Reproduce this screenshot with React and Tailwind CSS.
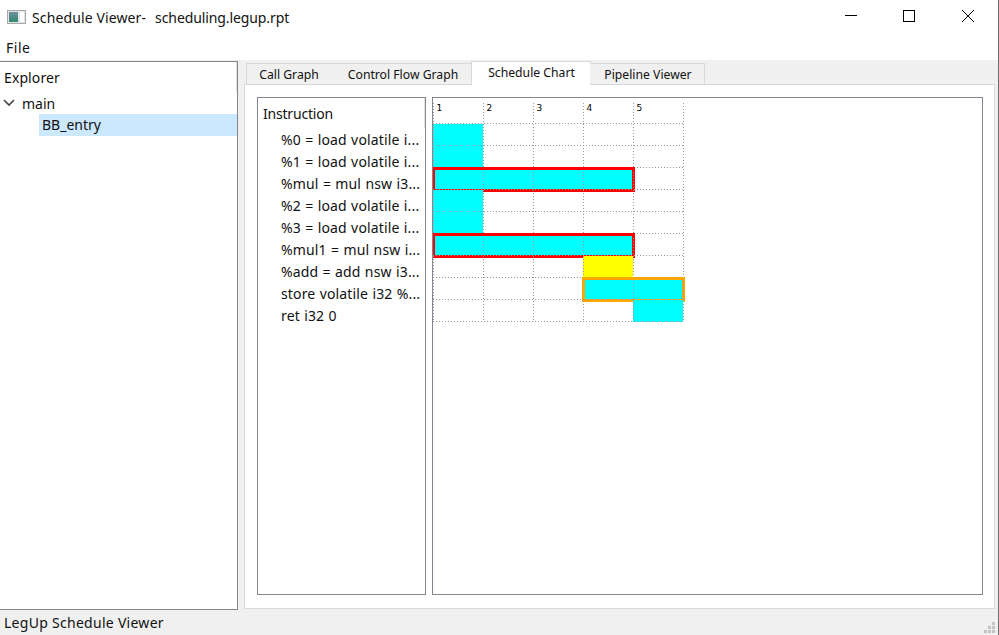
const rows = ['%0 = load volatile i...','%1 = load volatile i...','%mul = mul nsw i3...','%2 = load volatile i...','%3 = load volatile i...','%mul1 = mul nsw i...','%add = add nsw i3...','store volatile i32 %...','ret i32 0'];
const bars = [
  { r: 0, s: 0, n: 1, c: '#00ffff' },
  { r: 1, s: 0, n: 1, c: '#00ffff' },
  { r: 2, s: 0, n: 4, c: '#00ffff', b: '#ff0000' },
  { r: 3, s: 0, n: 1, c: '#00ffff' },
  { r: 4, s: 0, n: 1, c: '#00ffff' },
  { r: 5, s: 0, n: 4, c: '#00ffff', b: '#ff0000' },
  { r: 6, s: 3, n: 1, c: '#ffff00' },
  { r: 7, s: 3, n: 2, c: '#00ffff', b: '#ffa500' },
  { r: 8, s: 4, n: 1, c: '#00ffff' },
];
function Chart() {
  return (
    <svg className="block w-[549px] h-[496px]" viewBox="433 98 549 496">
      {bars.map((b, i) => {
        const x = 433 + b.s * 50, y = 124 + b.r * 22, w = b.n * 50;
        if (!b.b) return <rect key={i} x={x} y={y} width={w} height={22} fill={b.c} />;
        return (
          <g key={i}>
            <rect x={b.s === 0 ? x : x - 1} y={y - 1} width={b.s === 0 ? w + 2 : w + 3} height={25} fill={b.b} />
            <rect x={x + 2} y={y + 2} width={w - 3} height={19} fill={b.c} />
          </g>
        );
      })}
      {[0,1,2,3,4,5,6,7,8,9].map(i => (
        <line key={i} x1="433" x2="684" y1={123.5 + i * 22} y2={123.5 + i * 22} stroke="#999999" strokeDasharray="1 2" />
      ))}
      {[0,1,2,3,4,5].map(i => (
        <line key={i} x1={433.5 + i * 50} x2={433.5 + i * 50} y1="103" y2="322" stroke="#999999" strokeDasharray="1 2" />
      ))}
      {bars.filter(b => b.b).map((b, i) => {
        const x = 433 + b.s * 50, y = 124 + b.r * 22, w = b.n * 50;
        const lx = b.s === 0 ? x : x - 1;
        return (
          <g key={i}>
            <rect x={lx} y={y - 1} width={b.s === 0 ? w + 2 : w + 3} height={3} fill={b.b} />
            <rect x={lx} y={y - 1} width={b.s === 0 ? 2 : 3} height={22} fill={b.b} />
          </g>
        );
      })}
      {[1,2,3,4,5].map(i => (
        <text key={i} x={436.5 + (i - 1) * 50} y="111" fontSize="9" fontFamily="'DejaVu Sans', sans-serif" fill="#000">{i}</text>
      ))}
    </svg>
  );
}
export default function App() {
  return (
    <div className="w-[999px] h-[635px] overflow-hidden flex flex-col bg-[#f0f0f0] border-r border-[#6f6f6f] text-[14px] text-[#111] font-['Noto_Sans','Open_Sans',sans-serif]">
      <div className="h-[60px] bg-white flex flex-col shrink-0">
        <div className="h-[34px] flex items-center pl-[7px]">
          <svg width="19" height="14" viewBox="0 0 19 14" className="mr-[6px]">
            <defs>
              <linearGradient id="ic" x1="0" y1="0" x2="0" y2="1">
                <stop offset="0" stopColor="#6f8fa0" />
                <stop offset="1" stopColor="#2f8a70" />
              </linearGradient>
            </defs>
            <rect x="0.5" y="0.5" width="18" height="13" fill="#e4e4e4" stroke="#a8a8a8" />
            <rect x="2" y="2" width="9" height="10" fill="url(#ic)" />
            <rect x="13" y="2" width="4" height="10" fill="#ffffff" />
          </svg>
          <span className="tracking-[0.12px] whitespace-pre">Schedule Viewer-</span>
          <span className="ml-[9px] whitespace-pre tracking-[-0.1px]">scheduling.legup.rpt</span>
          <div className="ml-auto flex items-center">
            <svg width="179" height="34" viewBox="0 0 179 34">
              <line x1="26" x2="38" y1="15.5" y2="15.5" stroke="#000" />
              <rect x="84.5" y="10.5" width="11" height="11" fill="none" stroke="#000" />
              <path d="M143 10 L155 22 M155 10 L143 22" stroke="#000" fill="none" />
            </svg>
          </div>
        </div>
        <div className="h-[26px] pl-[6px] pt-[1px] leading-[26px] tracking-[0.5px]">File</div>
      </div>
      <div className="flex-1 flex min-h-0">
        <div className="w-[238px] h-[549px] mt-[1px] bg-white border-t border-r border-b border-[#828790] relative shrink-0">
          <div className="absolute right-0 top-0 h-[30px] w-px bg-[#e0e0e0]" />
          <div className="h-[30px] pl-[4px] flex items-center tracking-[0.1px]">Explorer</div>
          <div className="h-[22px] flex items-center">
            <svg width="22" height="22" viewBox="0 0 22 22">
              <path d="M4 8 L9 13 L14 8" fill="none" stroke="#444" strokeWidth="1.6" />
            </svg>
            <span>main</span>
          </div>
          <div className="h-[22px] ml-[39px] pl-[3px] pb-[2px] bg-[#cce8ff] flex items-center">BB_entry</div>
        </div>
        <div className="flex-1 flex flex-col pl-[6px] pr-[3px]">
          <div className="flex items-end h-[24px] pl-[2px] relative z-10 text-[12.2px]">
            <div className="h-[21px] w-[87px] bg-[#f0f0f0] border border-b-0 border-[#d9d9d9] flex items-center justify-center pt-[2px] pr-[1px]">Call Graph</div>
            <div className="h-[21px] w-[140px] -ml-px bg-[#f0f0f0] border border-b-0 border-l-0 border-[#d9d9d9] flex items-center justify-center pt-[2px] pl-[3px]">Control Flow Graph</div>
            <div className="h-[24px] w-[120px] -ml-px -mb-px bg-white border border-b-0 border-[#d9d9d9] flex items-center justify-center pl-[1px]">Schedule Chart</div>
            <div className="h-[21px] w-[115px] -ml-px bg-[#f0f0f0] border border-b-0 border-l-0 border-[#d9d9d9] flex items-center justify-center pt-[2px] pl-[2px]">Pipeline Viewer</div>
          </div>
          <div className="h-[525px] bg-white border border-[#d9d9d9] flex pt-[12px] pl-[12px] gap-[6px]">
            <div className="w-[169px] h-[498px] border border-[#828790] relative overflow-hidden">
              <div className="absolute right-0 top-0 h-[30px] w-px bg-[#e0e0e0]" />
              <div className="h-[30px] pl-[5px] flex items-center tracking-[-0.2px]">Instruction</div>
              {rows.map(r => (
                <div key={r} className="h-[22px] pl-[23px] flex items-center whitespace-nowrap tracking-[0.15px] [word-spacing:0.5px]">{r}</div>
              ))}
            </div>
            <div className="w-[551px] h-[498px] border border-[#828790]">
              <Chart />
            </div>
          </div>
        </div>
      </div>
      <div className="h-[25px] shrink-0 pl-[4px] flex items-center relative">
        <span className="tracking-[0.28px]">LegUp Schedule Viewer</span>
        <svg width="11" height="11" viewBox="0 0 11 11" className="absolute right-[3px] bottom-[2px]" fill="#c4c4c4">
          <rect x="8" y="0" width="3" height="3" />
          <rect x="4" y="4" width="3" height="3" /><rect x="8" y="4" width="3" height="3" />
          <rect x="0" y="8" width="3" height="3" /><rect x="4" y="8" width="3" height="3" /><rect x="8" y="8" width="3" height="3" />
        </svg>
      </div>
    </div>
  );
}
